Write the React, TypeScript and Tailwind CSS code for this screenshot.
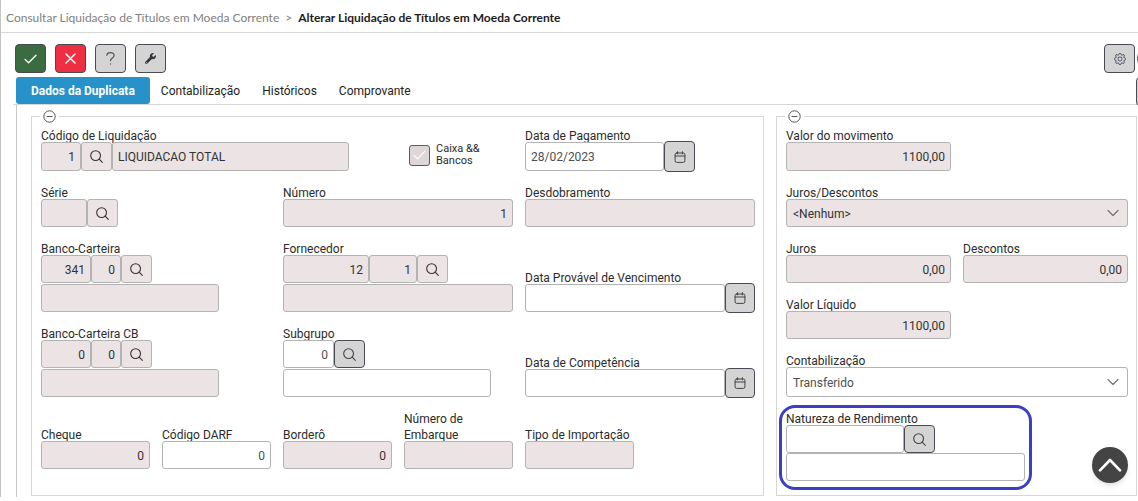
import type { ReactNode } from "react";
import { useState } from "react";
import clsx from "clsx";
import { BsGear } from "react-icons/bs";
import { FaWrench } from "react-icons/fa";

type FieldProps = {
  id: string;
  label: string;
  className?: string;
  children: ReactNode;
};

type TextBoxProps = {
  id?: string;
  label?: string;
  value?: string;
  disabled?: boolean;
  align?: "left" | "right";
  className?: string;
};

type IconButtonProps = {
  label: string;
  disabled?: boolean;
  className?: string;
  children: ReactNode;
};

const tabs = ["Dados da Duplicata", "Contabilização", "Históricos", "Comprovante"];

const toolButtonClassName = "flex h-[29px] w-[31px] shrink-0 items-center justify-center rounded border border-[#4a4b52]";

const SearchIcon = () => (
  <svg aria-hidden="true" className="size-[13px]" fill="none" stroke="currentColor" strokeLinecap="round" strokeWidth="1.1" viewBox="0 0 13 13">
    <circle cx="5.6" cy="5.6" r="4.9" />
    <path d="M9.2 9.2 12.3 12.3" />
  </svg>
);

const CalendarIcon = () => (
  <svg aria-hidden="true" className="size-[12px]" fill="none" stroke="currentColor" strokeLinecap="round" strokeWidth="1" viewBox="0 0 12 12">
    <rect height="9.4" rx="1.6" width="9.8" x="1.1" y="2" />
    <path d="M1.1 5h9.8M3.6.7v2.2M8.4.7v2.2" />
  </svg>
);

const ChevronDownIcon = () => (
  <svg aria-hidden="true" className="pointer-events-none absolute right-[9px] top-1/2 h-[7px] w-[12px] -translate-y-1/2 text-[#777]" fill="none" stroke="currentColor" strokeLinecap="round" strokeLinejoin="round" strokeWidth="1.3" viewBox="0 0 12 7">
    <path d="M1 1l5 5 5-5" />
  </svg>
);

const Field = ({ id, label, className, children }: FieldProps) => (
  <div className={clsx("flex min-w-0 flex-col", className)}>
    <label className="-mb-[2px] pt-[2px] text-[12px] leading-4 text-[#2b2b2b]" htmlFor={id}>
      {label}
    </label>
    {children}
  </div>
);

const TextBox = ({ id, label, value = "", disabled = false, align = "left", className = "h-7 w-full" }: TextBoxProps) => (
  <input
    aria-label={label}
    className={clsx(
      "min-w-0 rounded-[3px] border border-[#b3b3b3] px-[5px] pt-px text-[12px]",
      disabled ? "bg-[#ebe3e4] text-[#333]" : "bg-white text-[#505050]",
      align === "right" && "text-right",
      className,
    )}
    defaultValue={value}
    disabled={disabled}
    id={id}
    type="text"
  />
);

const IconButton = ({ label, disabled = false, className = "h-7 w-[31px]", children }: IconButtonProps) => (
  <button
    aria-label={label}
    className={clsx(
      "flex shrink-0 items-center justify-center border",
      disabled ? "rounded-[3px] border-[#b3b3b3] bg-[#ebe3e4] text-[#333]" : "rounded border-[#4a4b52] bg-[#d4d4d4] text-[#444]",
      className,
    )}
    disabled={disabled}
    type="button"
  >
    {children}
  </button>
);

const DateField = ({ id, label, className }: { id: string; label: string; className?: string }) => (
  <Field className={className} id={id} label={label}>
    <div className="flex items-center">
      <TextBox className="h-7 flex-1" id={id} />
      <IconButton className="-my-px h-[30px] w-[30px]" label={`Abrir calendário: ${label}`}>
        <CalendarIcon />
      </IconButton>
    </div>
  </Field>
);

const SelectField = ({ id, label, value, disabled = false, className }: { id: string; label: string; value: string; disabled?: boolean; className: string }) => (
  <Field className="col-span-2" id={id} label={label}>
    <div className="relative flex">
      <select
        className={clsx(
          "w-full appearance-none rounded-[3px] border border-[#b3b3b3] px-[6px] pt-[2px] text-[12px] opacity-100",
          disabled ? "bg-[#ebe3e4] text-[#333]" : "bg-white text-[#505050]",
          className,
        )}
        disabled={disabled}
        id={id}
      >
        <option>{value}</option>
      </select>
      <ChevronDownIcon />
    </div>
  </Field>
);

const Group = ({ name, children }: { name: string; children: ReactNode }) => (
  <fieldset className="min-w-0 border border-[#d6d6d6] pb-[13px] pl-[9px] pr-2">
    <legend className="-ml-px px-[3px]">
      <button aria-label={`Recolher ${name}`} className="block text-[#555]" type="button">
        <svg aria-hidden="true" className="size-[13px]" fill="none" stroke="currentColor" strokeWidth="1" viewBox="0 0 13 13">
          <circle cx="6.5" cy="6.5" r="5.7" />
          <path d="M3.6 6.5h5.8" />
        </svg>
      </button>
    </legend>
    {children}
  </fieldset>
);

const Toolbar = () => (
  <div className="flex justify-between pl-[14px] pt-[11px]">
    <div className="flex gap-[9px]">
      <button aria-label="Confirmar" className={clsx(toolButtonClassName, "bg-[#3b6b40] text-white")} type="button">
        <svg aria-hidden="true" className="h-[10px] w-[13px]" fill="none" stroke="currentColor" strokeLinecap="round" strokeLinejoin="round" strokeWidth="1.3" viewBox="0 0 13 10">
          <path d="M1 5.4l3.6 3.4L12 1.2" />
        </svg>
      </button>
      <button aria-label="Cancelar" className={clsx(toolButtonClassName, "bg-[#ee2f43] text-white")} type="button">
        <svg aria-hidden="true" className="size-[11px]" fill="none" stroke="currentColor" strokeLinecap="round" strokeWidth="1.5" viewBox="0 0 11 11">
          <path d="M1 1l9 9M10 1l-9 9" />
        </svg>
      </button>
      <button aria-label="Ajuda" className={clsx(toolButtonClassName, "bg-[#d4d4d4] text-[#555]")} type="button">
        <svg aria-hidden="true" className="h-[13px] w-[9px]" fill="none" stroke="currentColor" strokeLinecap="round" strokeWidth="1.2" viewBox="0 0 9 13">
          <path d="M.8 3.2C1 1.6 2.5.7 4.4.7c2.2 0 3.7 1.1 3.7 2.9 0 2.4-3.6 2.5-3.6 5.1M4.5 11.8v.3" />
        </svg>
      </button>
      <button aria-label="Ferramentas" className={clsx(toolButtonClassName, "bg-[#d4d4d4] text-[#33343c]")} type="button">
        <FaWrench className="size-[11px]" />
      </button>
    </div>
    <div className="-mr-[28px] flex gap-[2px]">
      <button aria-label="Configurações" className={clsx(toolButtonClassName, "bg-[#d4d4d4] text-[#3c4258]")} type="button">
        <BsGear className="size-[12px]" />
      </button>
      <button aria-label="Informações" className="size-[29px] shrink-0 rounded-full border border-[#4a4b52] bg-[#d4d4d4]" type="button" />
    </div>
  </div>
);

const TitleGroup = () => (
  <Group name="dados do título">
    <div className="grid grid-cols-6 items-end gap-3 pt-[3px] pb-[13px]">
      <Field className="col-span-3" id="codigo-liquidacao" label="Código de Liquidação">
        <div className="flex w-[308px] max-w-full">
          <TextBox align="right" className="h-[29px] w-10" disabled id="codigo-liquidacao" value="1" />
          <IconButton className="h-[29px] w-[31px]" disabled label="Pesquisar liquidação">
            <SearchIcon />
          </IconButton>
          <TextBox className="h-[29px] flex-1" disabled label="Descrição da liquidação" value="LIQUIDACAO TOTAL" />
        </div>
      </Field>
      <label className="flex items-center gap-[6px] pb-1 pl-[5px] text-[11px] leading-3 text-[#2b2b2b]">
        <span className="relative flex size-[21px] shrink-0">
          <input className="size-full appearance-none rounded-[3px] border border-[#5c5c5c] bg-[#dfd6d8]" defaultChecked disabled type="checkbox" />
          <svg aria-hidden="true" className="absolute inset-0 m-auto h-[10px] w-[13px] text-white" fill="none" stroke="currentColor" strokeLinecap="round" strokeLinejoin="round" strokeWidth="1.2" viewBox="0 0 13 10">
            <path d="M1 5.4l3.6 3.4L12 1.2" />
          </svg>
        </span>
        <span>Caixa &amp;&amp; Bancos</span>
      </label>
      <Field className="col-span-2" id="data-pagamento" label="Data de Pagamento">
        <div className="flex items-center">
          <TextBox className="h-[29px] w-[139px]" id="data-pagamento" value="28/02/2023" />
          <IconButton className="-my-px size-[31px]" label="Abrir calendário: Data de Pagamento">
            <CalendarIcon />
          </IconButton>
        </div>
      </Field>

      <Field className="col-span-2" id="serie" label="Série">
        <div className="flex">
          <TextBox className="h-7 w-[46px]" disabled id="serie" />
          <IconButton disabled label="Pesquisar série">
            <SearchIcon />
          </IconButton>
        </div>
      </Field>
      <Field className="col-span-2" id="numero" label="Número">
        <TextBox align="right" disabled id="numero" value="1" />
      </Field>
      <Field className="col-span-2" id="desdobramento" label="Desdobramento">
        <TextBox disabled id="desdobramento" />
      </Field>

      <Field className="col-span-2" id="banco-carteira" label="Banco-Carteira">
        <div className="flex">
          <TextBox align="right" className="h-7 w-[50px]" disabled id="banco-carteira" value="341" />
          <TextBox align="right" className="h-7 w-[30px]" disabled label="Carteira" value="0" />
          <IconButton disabled label="Pesquisar banco e carteira">
            <SearchIcon />
          </IconButton>
        </div>
        <TextBox className="mt-px h-7 w-[178px]" disabled label="Nome do banco" />
      </Field>
      <Field className="col-span-2" id="fornecedor" label="Fornecedor">
        <div className="flex">
          <TextBox align="right" className="h-7 w-[86px]" disabled id="fornecedor" value="12" />
          <TextBox align="right" className="h-7 w-12" disabled label="Filial do fornecedor" value="1" />
          <IconButton disabled label="Pesquisar fornecedor">
            <SearchIcon />
          </IconButton>
        </div>
        <TextBox className="mt-px h-7 w-full" disabled label="Nome do fornecedor" />
      </Field>
      <DateField className="col-span-2" id="data-vencimento" label="Data Provável de Vencimento" />

      <Field className="col-span-2" id="banco-carteira-cb" label="Banco-Carteira CB">
        <div className="flex">
          <TextBox align="right" className="h-7 w-[50px]" disabled id="banco-carteira-cb" value="0" />
          <TextBox align="right" className="h-7 w-[30px]" disabled label="Carteira CB" value="0" />
          <IconButton disabled label="Pesquisar banco e carteira CB">
            <SearchIcon />
          </IconButton>
        </div>
        <TextBox className="mt-px h-7 w-[178px]" disabled label="Nome do banco CB" />
      </Field>
      <Field className="col-span-2" id="subgrupo" label="Subgrupo">
        <div className="flex">
          <TextBox align="right" className="h-7 w-[51px]" id="subgrupo" value="0" />
          <IconButton label="Pesquisar subgrupo">
            <SearchIcon />
          </IconButton>
        </div>
        <TextBox className="mt-px h-7 w-[208px]" label="Nome do subgrupo" />
      </Field>
      <DateField className="col-span-2" id="data-competencia" label="Data de Competência" />

      <Field id="cheque" label="Cheque">
        <TextBox align="right" disabled id="cheque" value="0" />
      </Field>
      <Field id="codigo-darf" label="Código DARF">
        <TextBox align="right" id="codigo-darf" value="0" />
      </Field>
      <Field id="bordero" label="Borderô">
        <TextBox align="right" disabled id="bordero" value="0" />
      </Field>
      <Field id="numero-embarque" label="Número de Embarque">
        <TextBox disabled id="numero-embarque" />
      </Field>
      <Field id="tipo-importacao" label="Tipo de Importação">
        <TextBox disabled id="tipo-importacao" />
      </Field>
    </div>
  </Group>
);

const ValuesGroup = () => (
  <Group name="valores">
    <div className="grid grid-cols-2 gap-3 pt-[3px]">
      <Field id="valor-movimento" label="Valor do movimento">
        <TextBox align="right" className="h-[29px] w-full" disabled id="valor-movimento" value="1100,00" />
      </Field>
      <SelectField className="h-7" disabled id="juros-descontos" label="Juros/Descontos" value="<Nenhum>" />
      <Field id="juros" label="Juros">
        <TextBox align="right" disabled id="juros" value="0,00" />
      </Field>
      <Field id="descontos" label="Descontos">
        <TextBox align="right" disabled id="descontos" value="0,00" />
      </Field>
      <Field className="col-start-1" id="valor-liquido" label="Valor Líquido">
        <TextBox align="right" disabled id="valor-liquido" value="1100,00" />
      </Field>
      <SelectField className="h-[30px]" id="contabilizacao" label="Contabilização" value="Transferido" />
      <div className="relative col-span-2 w-[239px]">
        <Field id="natureza-rendimento" label="Natureza de Rendimento">
          <div className="flex">
            <TextBox className="h-7 w-[118px]" id="natureza-rendimento" />
            <IconButton label="Pesquisar natureza de rendimento">
              <SearchIcon />
            </IconButton>
          </div>
          <TextBox className="h-7 w-full" label="Descrição da natureza de rendimento" />
        </Field>
        <div className="pointer-events-none absolute -bottom-[9px] -left-[7px] -right-[7px] -top-[4px] rounded-[16px] border-[3px] border-[#3a3fc6]" />
      </div>
    </div>
  </Group>
);

export default function App() {
  const [activeTab, setActiveTab] = useState(tabs[0]);

  return (
    <div className="overflow-hidden bg-white font-['Roboto','Noto_Sans',sans-serif]">
      <div className="border-l border-[#c4c4c4]">
        <nav aria-label="Trilha" className="flex h-[33px] items-center gap-[6px] border-b border-[#d6d6d6] pl-[5px] pt-[3px] font-['Lato',sans-serif] text-[12px]">
          <a className="text-[#808080]" href="#consultar">
            Consultar Liquidação de Títulos em Moeda Corrente
          </a>
          <span className="text-[#808080]">&gt;</span>
          <span aria-current="page" className="font-bold text-[#1c1c1c]">
            Alterar Liquidação de Títulos em Moeda Corrente
          </span>
        </nav>

        <Toolbar />

        <div className="flex justify-between pl-[15px] pt-1">
          <div className="flex h-[27px]" role="tablist">
            {tabs.map((tab) => (
              <button
                aria-selected={tab === activeTab}
                className={clsx(
                  "rounded-[3px] pt-px text-[12px]",
                  tab === activeTab ? "bg-[#2792c9] px-[15px] font-bold text-white" : "px-[11px] text-[#222]",
                )}
                key={tab}
                onClick={() => setActiveTab(tab)}
                role="tab"
                type="button"
              >
                {tab}
              </button>
            ))}
          </div>
          <button aria-label="Mais opções" className={clsx(toolButtonClassName, "-mb-1 -mr-[29px] bg-[#d4d4d4]")} type="button" />
        </div>

        <div className="ml-3 border-t border-[#d6d6d6]">
          <main className="ml-[3px] border-l border-[#c9c9c9] pb-px pl-[14px] pr-px pt-[5px]">
            <div className="grid grid-cols-[733fr_361fr] gap-3">
              <TitleGroup />
              <ValuesGroup />
            </div>
          </main>
        </div>
      </div>

      <button aria-label="Voltar ao topo" className="fixed bottom-[18px] right-[10px] flex size-9 items-center justify-center rounded-full bg-[#444] text-white shadow-md" type="button">
        <svg aria-hidden="true" className="h-[14px] w-[24px]" fill="none" stroke="currentColor" strokeLinecap="round" strokeLinejoin="round" strokeWidth="2.6" viewBox="0 0 24 14">
          <path d="M2 12.4l10-10.4 10 10.4" />
        </svg>
      </button>
    </div>
  );
}
